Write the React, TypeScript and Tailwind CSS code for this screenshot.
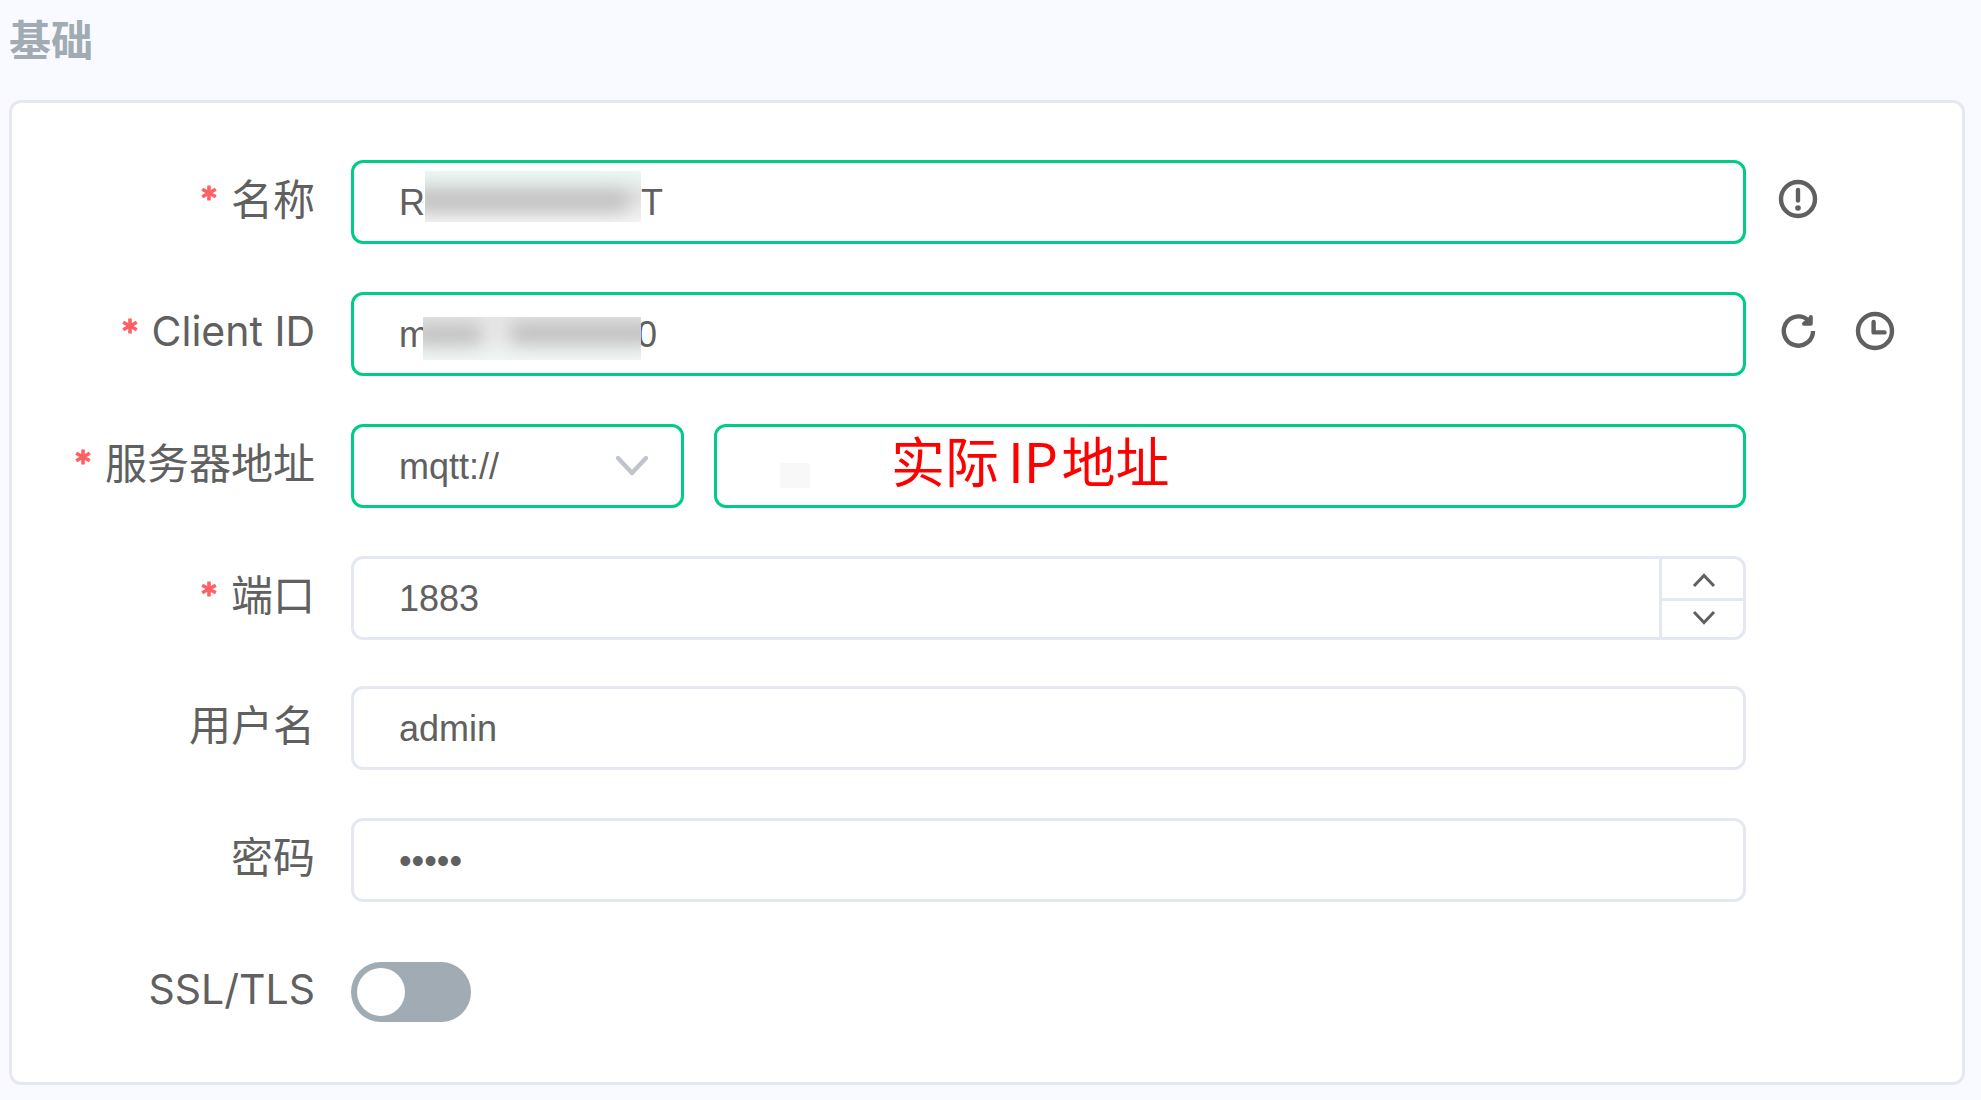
import type { ReactNode } from 'react';

interface FieldProps {
  id: string;
  label: string;
  latin?: boolean;
  required?: boolean;
  actions?: ReactNode;
  children: ReactNode;
}

const fieldBase =
  'h-[84px] rounded-xl border-[3px] bg-white px-[45px] pt-0.5 text-[36px] text-[#606060] outline-none';

function Field({ id, label, latin = false, required = false, actions, children }: FieldProps) {
  return (
    <div className="flex items-center">
      <label
        htmlFor={id}
        className={`flex h-[84px] w-[303px] shrink-0 items-center justify-end gap-3.5 whitespace-nowrap font-['Inter','Noto_Sans_CJK_SC',sans-serif] text-[#606060] ${
          latin ? 'pb-1 text-[41px]' : 'pb-1.5 text-[42px]'
        }`}
      >
        {required && <Asterisk />}
        {label}
      </label>
      <div className="ml-[36px] flex min-w-0 flex-1 gap-[30px]">{children}</div>
      <div className="flex w-[216px] shrink-0 gap-[35px] pb-1.5 pl-[31px]">{actions}</div>
    </div>
  );
}

function Asterisk() {
  return (
    <svg viewBox="0 0 16 16" className="mb-3 size-4" stroke="#ff6064" strokeWidth="3.6" aria-hidden="true">
      <path d="M8 0.5V15.5M1.2 4.2L14.8 11.8M14.8 4.2L1.2 11.8" />
    </svg>
  );
}

function IconButton({ label, children }: { label: string; children: ReactNode }) {
  return (
    <button type="button" aria-label={label} className="text-[#606060]">
      <svg
        viewBox="0 0 42 42"
        className="size-[42px]"
        fill="none"
        stroke="currentColor"
        strokeWidth="4.4"
        strokeLinecap="round"
      >
        {children}
      </svg>
    </button>
  );
}

function NameMask() {
  return (
    <div className="absolute left-[74px] top-[11px] h-[51px] w-[216px] overflow-hidden bg-linear-to-b from-[#eaf8f4] via-[#e2e2e2] to-[#f4f4f4]">
      <div className="absolute -left-3 top-[20px] h-[20px] w-[216px] rounded-lg bg-[#bebebe] blur-[9px]" />
    </div>
  );
}

function ClientMask() {
  return (
    <div className="absolute left-[72px] top-[25px] h-[43px] w-[218px] overflow-hidden bg-linear-to-b from-[#e6e6e6] via-[#ebebeb] to-[#eff6f4]">
      <div className="absolute -left-3 top-[8px] h-[19px] w-[72px] rounded-lg bg-[#bcbcbc] blur-[9px]" />
      <div className="absolute left-[86px] top-[6px] h-[20px] w-[148px] rounded-lg bg-[#bcbcbc] blur-[9px]" />
    </div>
  );
}

export default function App() {
  return (
    <main className="min-h-screen bg-[#f9faff] px-[9px] pb-4 pr-4 font-['Liberation_Sans',Arial,sans-serif]">
      <h2 className="flex h-[100px] items-center pb-[26px] font-['Noto_Sans_CJK_SC',sans-serif] text-[42px] font-bold text-[#a0abb3]">
        基础
      </h2>
      <form className="rounded-xl border-[3px] border-[#e4e8f2] bg-white pb-[48px] pt-[57px]">
        <div className="flex flex-col gap-[48px]">
          <Field
            id="name"
            label="名称"
            required
            actions={
              <IconButton label="提示">
                <circle cx="21" cy="21" r="17" />
                <path d="M21 12V22.5" />
                <circle cx="21" cy="30" r="2.8" fill="currentColor" stroke="none" />
              </IconButton>
            }
          >
            <div className="relative flex-1">
              <input
                id="name"
                defaultValue={`R${'\u00a0'.repeat(21)}\u2006T`}
                className={`${fieldBase} w-full border-[#00cc88]`}
              />
              <NameMask />
            </div>
          </Field>

          <Field
            id="client"
            label="Client ID"
            latin
            required
            actions={
              <>
                <IconButton label="刷新">
                  <path d="M36 21A14.6 14.6 0 1 1 31.5 10.5" strokeLinecap="butt" />
                  <path d="M33.8 7V13.8H27L33.8 8Z" strokeWidth="4" strokeLinejoin="round" fill="currentColor" />
                </IconButton>
                <IconButton label="时间">
                  <circle cx="21" cy="21" r="17" />
                  <path d="M19.6 12V22.4H30.5" strokeLinejoin="round" />
                </IconButton>
              </>
            }
          >
            <div className="relative flex-1">
              <input
                id="client"
                defaultValue={`m${'\u00a0'.repeat(19)}\u2005\u20050`}
                className={`${fieldBase} w-full border-[#00cc88]`}
              />
              <ClientMask />
            </div>
          </Field>

          <Field id="host" label="服务器地址" required>
            <div className="relative w-[333px] shrink-0">
              <select
                aria-label="协议"
                className={`${fieldBase} w-full appearance-none border-[#00cc88]`}
              >
                <option>mqtt://</option>
              </select>
              <svg
                viewBox="0 0 36 24"
                className="pointer-events-none absolute right-[34px] top-[30px] h-[24px] w-[36px]"
                fill="none"
                stroke="#c0c4cc"
                strokeWidth="4.4"
                strokeLinecap="round"
                strokeLinejoin="round"
              >
                <path d="M4 4L18 19L32 4" />
              </svg>
            </div>
            <div className="relative min-w-0 flex-1">
              <input
                id="host"
                defaultValue={'实际\u2006IP\u200a地址'}
                className="h-[84px] w-full rounded-xl border-[3px] border-[#00cc88] bg-white pb-3.5 pl-[174px] font-['Noto_Sans_CJK_SC',sans-serif] text-[54px] text-[#ff0000] outline-none"
              />
              <div className="absolute left-[66px] top-[39px] h-[25px] w-[30px] bg-[#f8f8f8]" />
            </div>
          </Field>

          <Field id="port" label="端口" required>
            <div className="flex h-[84px] flex-1 overflow-hidden rounded-xl border-[3px] border-[#e4e8f2]">
              <input
                id="port"
                inputMode="numeric"
                defaultValue="1883"
                className="min-w-0 flex-1 px-[45px] pt-0.5 text-[36px] text-[#606060] outline-none"
              />
              <div className="flex w-[84px] flex-col border-l-[3px] border-[#e4e8f2]">
                <button
                  type="button"
                  aria-label="增加"
                  className="flex h-[42px] items-center justify-center border-b-[3px] border-[#e4e8f2] pl-0.5 pt-0.5"
                >
                  <svg viewBox="0 0 24 16" className="h-4 w-6" fill="none" stroke="#606060" strokeWidth="3">
                    <path d="M2 14L12 3.5L22 14" />
                  </svg>
                </button>
                <button
                  type="button"
                  aria-label="减少"
                  className="flex flex-1 items-center justify-center pb-0.5 pl-0.5"
                >
                  <svg viewBox="0 0 24 16" className="h-4 w-6" fill="none" stroke="#606060" strokeWidth="3">
                    <path d="M2 2L12 12.5L22 2" />
                  </svg>
                </button>
              </div>
            </div>
          </Field>

          <div className="-mt-0.5">
            <Field id="user" label="用户名">
              <input id="user" defaultValue="admin" className={`${fieldBase} w-full border-[#e4e8f2]`} />
            </Field>
          </div>

          <Field id="password" label="密码">
            <input
              id="password"
              type="password"
              defaultValue="admin"
              className={`${fieldBase} w-full border-[#e4e8f2]`}
            />
          </Field>

          <Field id="ssl" label="SSL/TLS" latin>
            <input
              id="ssl"
              type="checkbox"
              role="switch"
              className="h-[60px] w-[120px] appearance-none rounded-full bg-[#a0abb3] p-1.5 before:block before:size-[48px] before:rounded-full before:bg-white checked:bg-[#00cc88] checked:before:ml-auto"
            />
          </Field>
        </div>
      </form>
    </main>
  );
}
